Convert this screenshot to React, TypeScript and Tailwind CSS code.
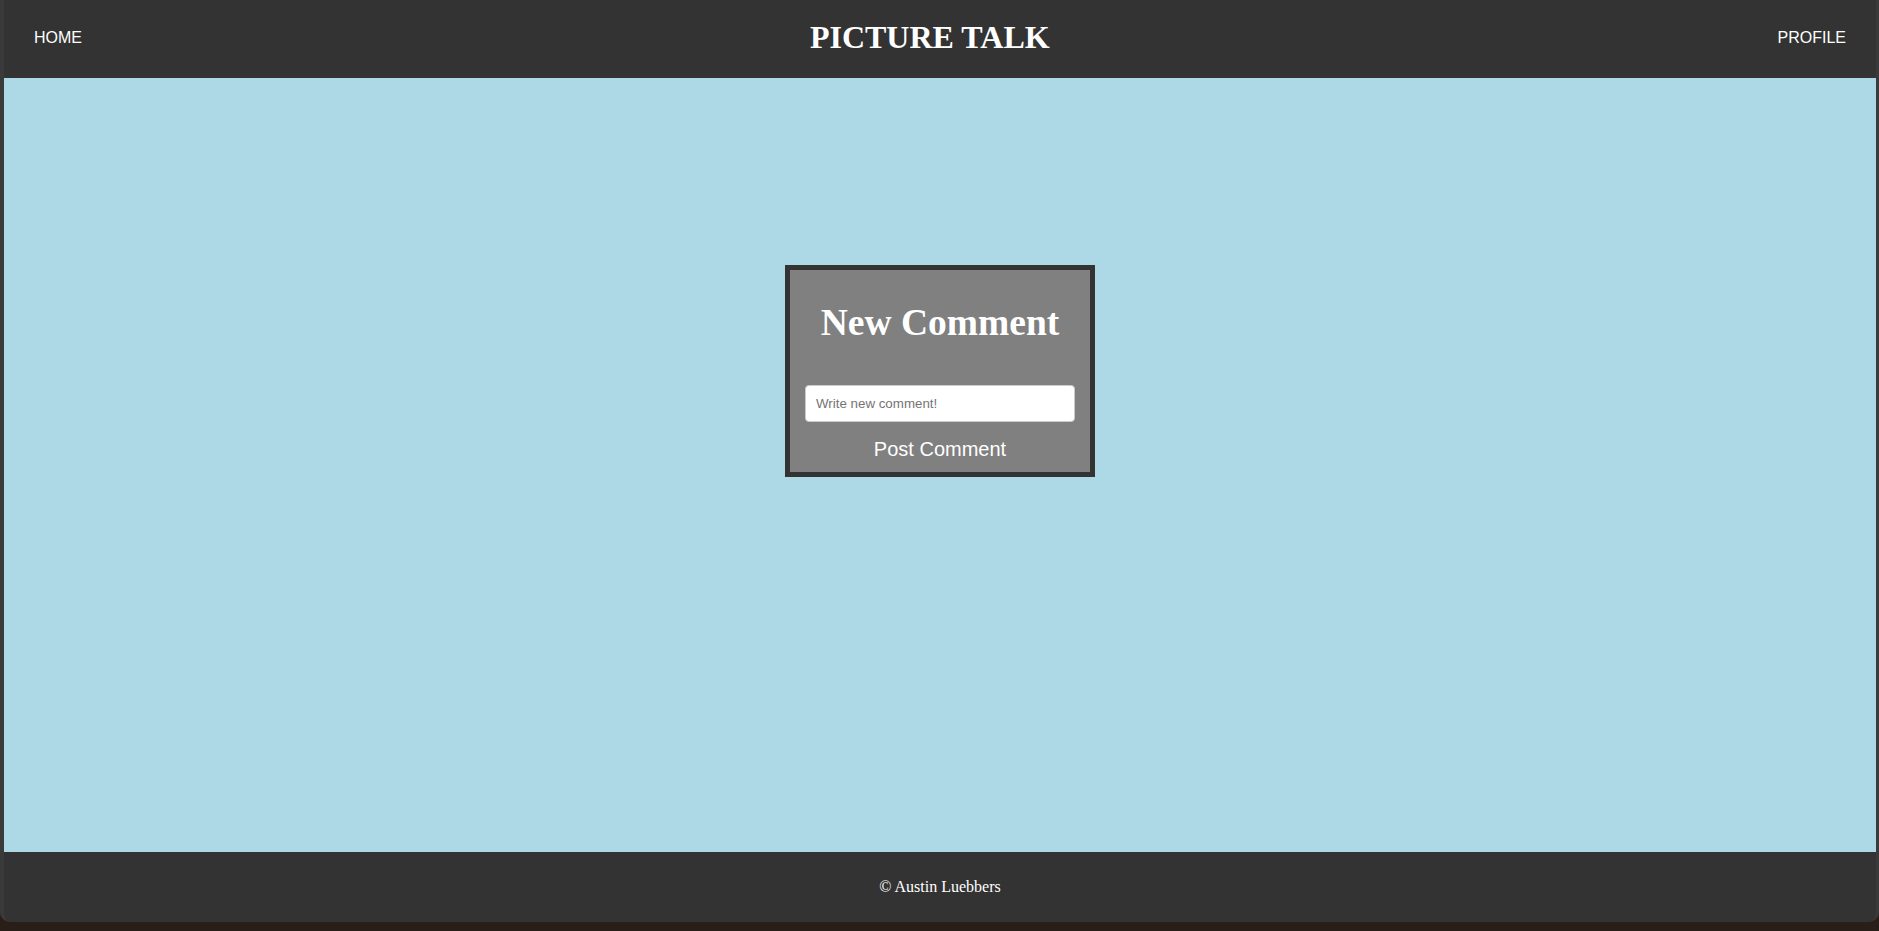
export default function App() {
  return (
    <div className="h-[931px] overflow-hidden bg-[#2a1f18]">
      <div className="flex h-[922px] flex-col overflow-hidden rounded-b-[10px] border-l-4 border-r-[3px] border-[#3a3a3a] bg-[#333333]">
        <header className="flex h-[78px] shrink-0 items-center justify-between px-[30px] pb-[3px] text-white">
          <a className="font-['Liberation_Sans',Arial,sans-serif] text-[16px] leading-[18px]">HOME</a>
          <h1 className="font-['Liberation_Serif','Times_New_Roman',serif] text-[32px] font-bold leading-[37px]">PICTURE TALK</h1>
          <a className="font-['Liberation_Sans',Arial,sans-serif] text-[16px] leading-[18px]">PROFILE</a>
        </header>

        <main className="flex flex-1 flex-col items-center bg-[#add8e6]">
          <div className="mt-[187px] flex w-[310px] flex-col items-center border-[5px] border-[#333333] bg-[#808080]">
            <h2 className="mt-[31px] font-['Liberation_Serif','Times_New_Roman',serif] text-[37.5px] font-bold leading-[43px] text-white">
              New Comment
            </h2>
            <input
              type="text"
              placeholder="Write new comment!"
              className="mt-[41px] h-[37px] w-[270px] rounded-[4px] border border-[#cccccc] bg-white px-[10px] font-['Liberation_Sans',Arial,sans-serif] text-[13.333px] text-black placeholder:text-[#757575] outline-none"
            />
            <button className="mt-[16px] mb-[11px] font-['Liberation_Sans',Arial,sans-serif] text-[20px] leading-[23px] text-white">
              Post Comment
            </button>
          </div>
        </main>

        <footer className="flex h-[70px] shrink-0 items-center justify-center font-['Liberation_Serif','Times_New_Roman',serif] text-[16px] text-white">
          © Austin Luebbers
        </footer>
      </div>
    </div>
  );
}
